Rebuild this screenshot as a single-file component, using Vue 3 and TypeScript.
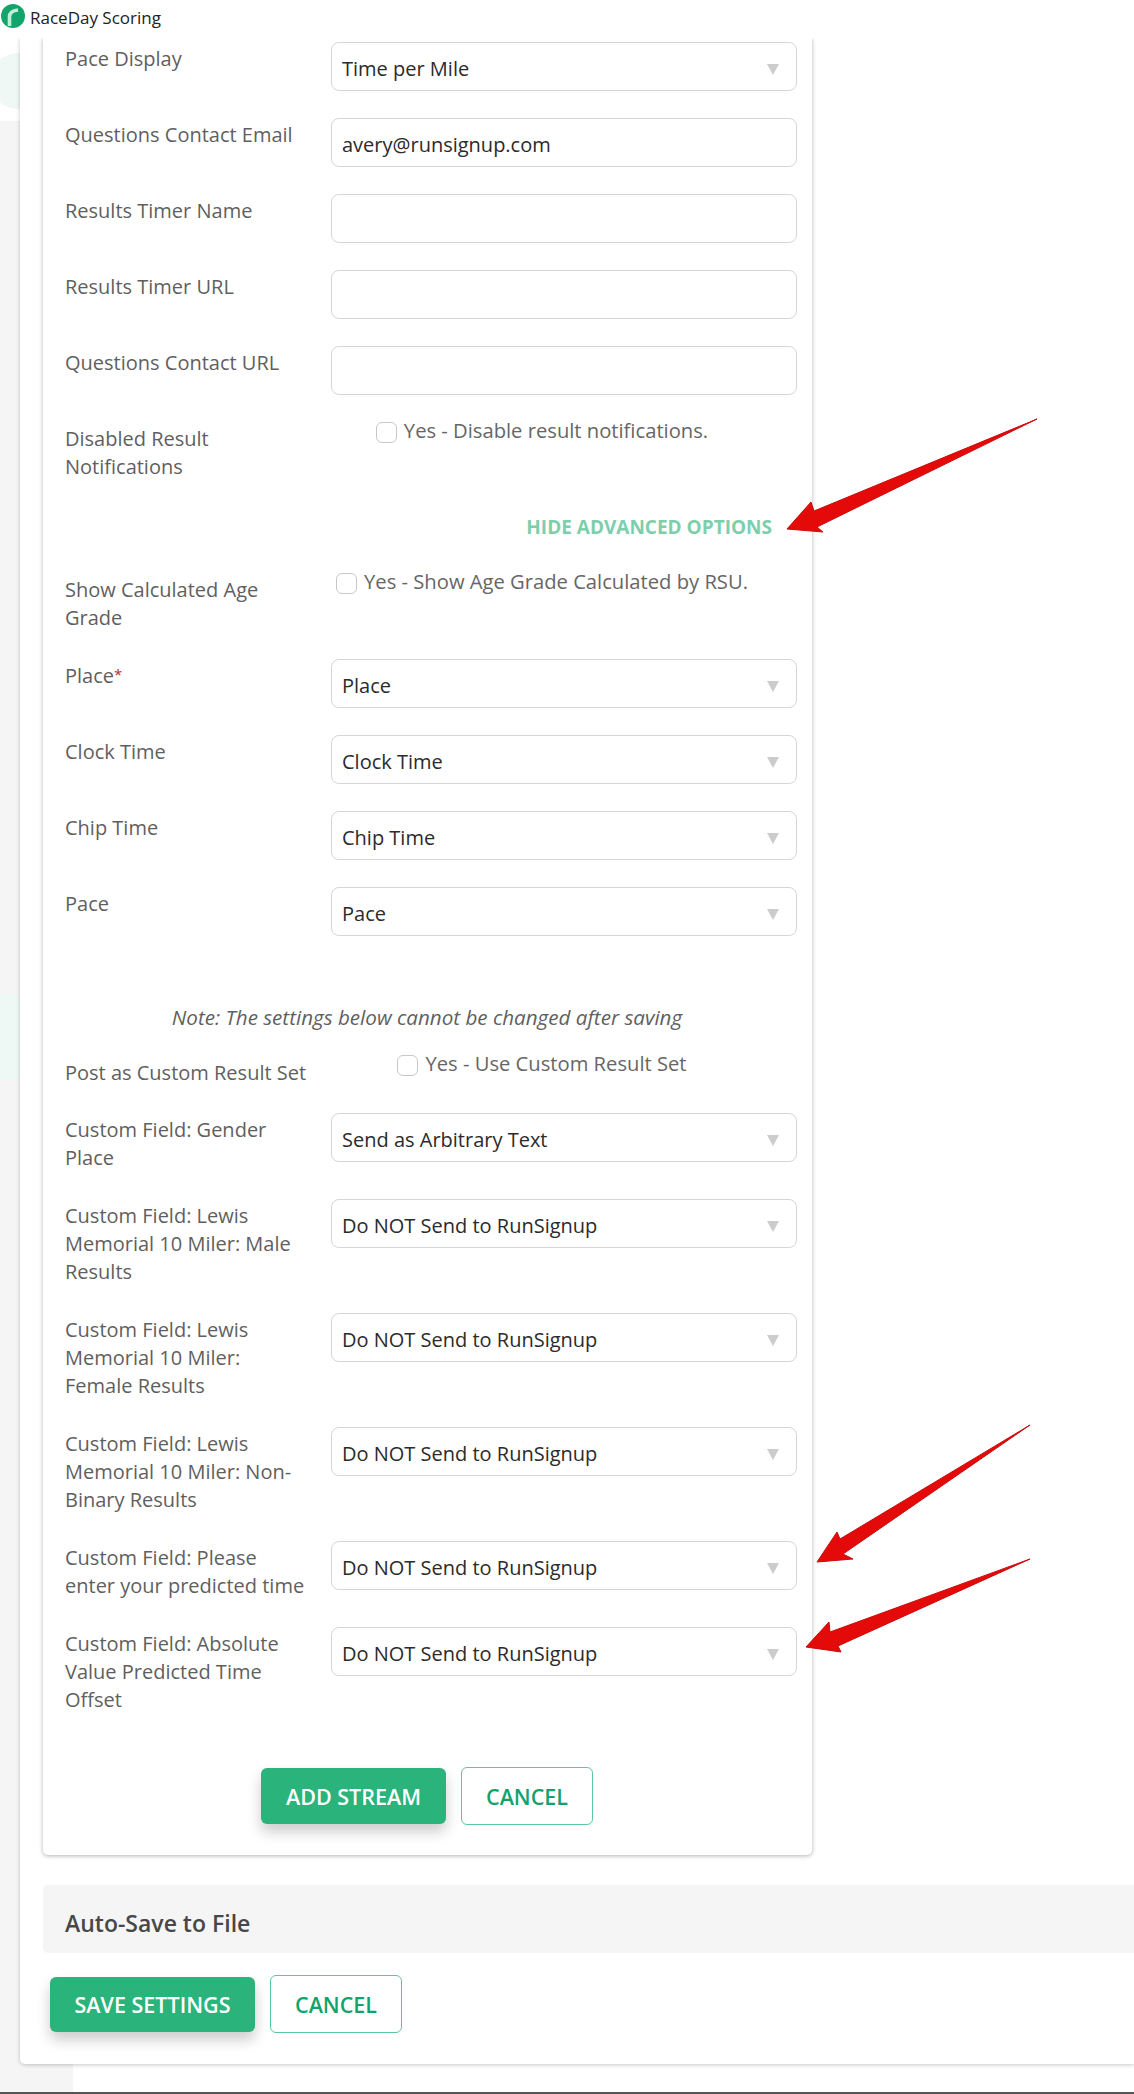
<script setup lang="ts">
type Row = { label: string; req?: boolean; value?: string; select?: boolean; check?: string; cls?: string }

const top: Row[] = [
  { label: 'Pace Display', value: 'Time per Mile', select: true },
  { label: 'Questions Contact Email', value: 'avery@runsignup.com' },
  { label: 'Results Timer Name', value: '' },
  { label: 'Results Timer URL', value: '' },
  { label: 'Questions Contact URL', value: '' },
  { label: 'Disabled Result Notifications', check: 'Yes - Disable result notifications.' },
]
const middle: Row[] = [
  { label: 'Show Calculated Age Grade', check: 'Yes - Show Age Grade Calculated by RSU.' },
  { label: 'Place', req: true, value: 'Place', select: true },
  { label: 'Clock Time', value: 'Clock Time', select: true },
  { label: 'Chip Time', value: 'Chip Time', select: true },
  { label: 'Pace', value: 'Pace', select: true },
]
const dns = 'Do NOT Send to RunSignup'
const bottom: Row[] = [
  { label: 'Post as Custom Result Set', check: 'Yes - Use Custom Result Set', cls: 'short' },
  { label: 'Custom Field: Gender Place', value: 'Send as Arbitrary Text', select: true },
  { label: 'Custom Field: Lewis Memorial 10 Miler: Male Results', value: dns, select: true },
  { label: 'Custom Field: Lewis Memorial 10 Miler: Female Results', value: dns, select: true },
  { label: 'Custom Field: Lewis Memorial 10 Miler: Non-Binary Results', value: dns, select: true },
  { label: 'Custom Field: Please enter your predicted time', value: dns, select: true },
  { label: 'Custom Field: Absolute Value Predicted Time Offset', value: dns, select: true },
]
const groups = { top, middle, bottom }
</script>

<template>
  <div class="page">
    <header class="titlebar">
      <svg class="logo" width="26" height="26" viewBox="0 0 26 26">
        <circle cx="13" cy="13" r="12" fill="#12a56b" />
        <path d="M9.5 23 V14 C9.5 9.5 12.5 7.5 18 7" fill="none" stroke="#c4ecd9" stroke-width="3.6" />
      </svg>
      <span>RaceDay Scoring</span>
    </header>

    <div class="sidebar">
      <div class="side-top"><div class="side-circle"></div></div>
      <div class="side-band"></div>
    </div>

    <main class="outer">
      <section class="inner">
        <div v-for="r in groups.top" :key="r.label" class="row">
          <label class="lbl">{{ r.label }}</label>
          <div v-if="r.check" class="check"><span class="box"></span>{{ r.check }}</div>
          <div v-else class="field">
            <span>{{ r.value }}</span><i v-if="r.select" class="tri"></i>
          </div>
        </div>

        <div class="hide">HIDE ADVANCED OPTIONS</div>

        <div v-for="r in groups.middle" :key="r.label" class="row">
          <label class="lbl">{{ r.label }}<em v-if="r.req">*</em></label>
          <div v-if="r.check" class="check"><span class="box"></span>{{ r.check }}</div>
          <div v-else class="field">
            <span>{{ r.value }}</span><i v-if="r.select" class="tri"></i>
          </div>
        </div>

        <p class="note">Note: The settings below cannot be changed after saving</p>

        <div v-for="r in groups.bottom" :key="r.label" class="row" :class="r.cls">
          <label class="lbl">{{ r.label }}</label>
          <div v-if="r.check" class="check"><span class="box"></span>{{ r.check }}</div>
          <div v-else class="field">
            <span>{{ r.value }}</span><i v-if="r.select" class="tri"></i>
          </div>
        </div>

        <div class="actions center">
          <button class="btn primary add">ADD STREAM</button>
          <button class="btn ghost">CANCEL</button>
        </div>
      </section>

      <div class="autosave">Auto-Save to File</div>

      <div class="actions save">
        <button class="btn primary settings">SAVE SETTINGS</button>
        <button class="btn ghost">CANCEL</button>
      </div>
    </main>

    <svg class="arrows" width="1134" height="2094" viewBox="0 0 1134 2094">
      <g fill="#e40a0a" stroke="#c90b0b" stroke-width="1" stroke-linejoin="round">
        <path d="M787 529 L811 502 L814 511 L1037 419 L817 527 L823 532 Z" />
        <path d="M817 1562 L837 1532 L840 1539 L1030 1425 L843 1554 L853 1559 Z" />
        <path d="M806 1647 L829 1622 L830 1632 L1030 1559 L838 1646 L841 1652 Z" />
      </g>
    </svg>
  </div>
</template>

<style>
html, body { margin: 0; padding: 0; background: #fff; }
</style>

<style scoped>
.page {
  position: relative;
  width: 1134px;
  height: 2094px;
  overflow: hidden;
  background: #fff;
  box-sizing: border-box;
  border-bottom: 2px solid #555;
  font-family: "Open Sans", "Liberation Sans", sans-serif;
  color: #5a5a5a;
}
.titlebar {
  position: relative;
  z-index: 3;
  height: 38px;
  display: flex;
  align-items: flex-start;
  gap: 4px;
  padding: 3px 0 0 0;
  box-sizing: border-box;
  background: #fff;
  font-size: 17px;
  line-height: 30px;
  color: #222;
}
.logo { flex: none; }
.sidebar {
  position: absolute;
  left: 0;
  top: 38px;
  bottom: 0;
  width: 73px;
  background: #f5f5f5;
}
.side-top {
  height: 83px;
  background: #fff;
  overflow: hidden;
}
.side-circle {
  width: 56px;
  height: 56px;
  margin: 15px 0 0 -10px;
  border-radius: 50%;
  background: #eff8f4;
}
.side-band {
  height: 84px;
  margin-top: 874px;
  background: #eef8f4;
}
.outer {
  position: relative;
  z-index: 1;
  margin-left: 20px;
  width: 1114px;
  height: 2026px;
  background: #fff;
  border-radius: 0 0 0 5px;
  box-shadow: 0 1px 4px rgba(0, 0, 0, 0.22);
  padding-left: 23px;
  box-sizing: border-box;
}
.inner {
  width: 769px;
  height: 1817px;
  box-sizing: border-box;
  padding: 4px 15px 0 22px;
  background: #fff;
  border-radius: 0 0 5px 5px;
  box-shadow: 0 1px 4px rgba(0, 0, 0, 0.3);
}
.row {
  display: grid;
  grid-template-columns: 266px 466px;
  align-items: start;
  margin-bottom: 27px;
}
.row.short { margin-bottom: 26px; }
.row.short .check { margin-top: -1px; }
.lbl {
  display: block;
  padding-top: 3px;
  padding-right: 23px;
  font-size: 20px;
  line-height: 28px;
  color: #5f5f5f;
}
.lbl em { color: #b03030; font-style: normal; font-size: 15px; vertical-align: 3px; line-height: 1; }
.field {
  height: 49px;
  box-sizing: border-box;
  border: 1px solid #d6d6d6;
  border-radius: 8px;
  padding: 3px 17px 0 10px;
  display: flex;
  align-items: center;
  justify-content: space-between;
  font-size: 20px;
  color: #2b2b2b;
}
.tri {
  width: 0;
  height: 0;
  border-left: 6px solid transparent;
  border-right: 6px solid transparent;
  border-top: 11px solid #cccccc;
  margin-top: 2px;
}
.check {
  display: flex;
  align-items: flex-start;
  justify-content: center;
  gap: 7px;
  padding-right: 44px;
  font-size: 20.2px;
  line-height: 16px;
  color: #666;
  white-space: nowrap;
}
.box {
  flex: none;
  width: 21px;
  height: 21px;
  box-sizing: border-box;
  border: 1px solid #c8c8c8;
  border-radius: 6px;
  background: #fff;
}
.hide {
  height: 38px;
  margin-bottom: 27px;
  padding-right: 25px;
  text-align: right;
  font-size: 19px;
  font-weight: 700;
  line-height: 38px;
  color: #7dcfac;
}
.note {
  margin: 67px 0 25px;
  padding-right: 8px;
  text-align: center;
  font-style: italic;
  font-size: 20.6px;
  line-height: 28px;
  color: #5f5f5f;
}
.actions {
  display: flex;
  align-items: center;
  gap: 15px;
}
.actions.center { justify-content: center; margin-top: 53px; margin-left: -8px; }
.btn {
  font-family: inherit;
  font-size: 21.5px;
  font-weight: 600;
  border-radius: 6px;
  box-sizing: border-box;
  cursor: pointer;
}
.primary {
  height: 56px;
  border: none;
  background: #2ab37a;
  color: #fff;
  box-shadow: 0 8px 14px rgba(0, 0, 0, 0.2);
}
.add { width: 185px; }
.settings { width: 205px; height: 55px; }
.ghost {
  width: 132px;
  height: 58px;
  background: #fff;
  border: 1px solid #5cc7a1;
  color: #13a26c;
}
.autosave {
  margin-top: 30px;
  height: 68px;
  box-sizing: border-box;
  padding: 23px 0 0 22px;
  background: #f5f5f5;
  border-radius: 5px 0 0 5px;
  font-size: 23px;
  font-weight: 600;
  line-height: 30px;
  color: #474747;
}
.actions.save { margin: 22px 0 0 7px; }
.arrows {
  position: absolute;
  left: 0;
  top: 0;
  z-index: 2;
  pointer-events: none;
}
</style>
